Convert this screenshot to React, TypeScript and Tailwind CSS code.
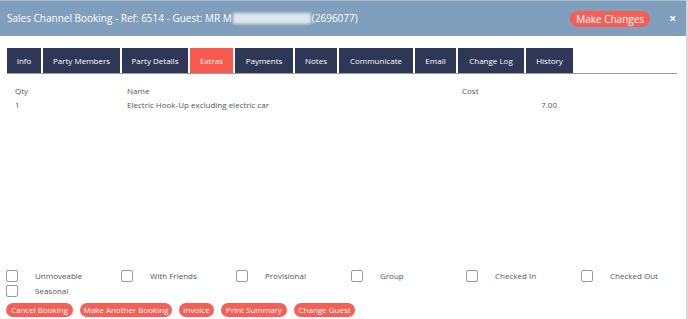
import React from 'react'

const tabs: [string, string][] = [
  ['Info', 'w-[34px]'],
  ['Party Members', 'w-[77px]'],
  ['Party Details', 'w-[66px]'],
  ['Extras', 'w-[43px]'],
  ['Payments', 'w-[58px]'],
  ['Notes', 'w-[42px]'],
  ['Communicate', 'w-[74px]'],
  ['Email', 'w-[41px]'],
  ['Change Log', 'w-[66px]'],
  ['History', 'w-[47px]'],
]
const flags = ['Unmoveable', 'With Friends', 'Provisional', 'Group', 'Checked In', 'Checked Out', 'Seasonal']
const actions: [string, string][] = [
  ['Cancel Booking', 'w-[67px]'],
  ['Make Another Booking', 'w-[92px]'],
  ['Invoice', 'w-[35px]'],
  ['Print Summary', 'w-[66px]'],
  ['Change Guest', 'w-[61px]'],
]

function Checkbox({ label }: { label: string }) {
  return (
    <div className="flex items-center h-[15px]">
      <span className="w-[12px] h-[12px] rounded-[2px] border border-[#9a9a9a] bg-white shrink-0" />
      <span className="ml-[17px] text-[8px] text-[#555]">{label}</span>
    </div>
  )
}

export default function App() {
  return (
    <div
      className="w-[688px] h-[319px] bg-white relative overflow-hidden flex flex-col border-r-2 border-[#d6d6d6]"
      style={{ fontFamily: '"Open Sans", "Liberation Sans", sans-serif' }}
    >
      <div className="h-[36px] bg-[#7f9fbd] border-t border-[#a9bfd3] flex items-center pl-[7px] pr-[10px]">
        <div className="text-[10px] text-white flex items-center">
          <span>Sales Channel Booking - Ref: 6514 - Guest: MR M</span>
          <span className="inline-block w-[78px] h-[11px] bg-[#dde6ef] blur-[1.5px] mx-[1px]" />
          <span>(2696077)</span>
        </div>
        <button className="ml-auto w-[80px] h-[16px] rounded-full bg-[#f55f56] text-white text-[10px] leading-none">
          Make Changes
        </button>
        <span className="ml-[19px] text-white text-[12px] font-bold leading-none">×</span>
      </div>

      <div className="px-[7px] pt-[12px]">
        <div className="flex gap-[2px] border-b border-[#9b9b9b] w-[670px]">
          {tabs.map(([t, w]) => (
            <div
              key={t}
              className={
                'h-[25px] flex items-center justify-center text-[8px] text-white ' +
                w +
                (t === 'Extras' ? ' bg-[#f85a50]' : ' bg-[#2f3756]')
              }
            >
              {t}
            </div>
          ))}
        </div>
      </div>

      <div className="pl-[15px] pt-[10px] text-[8px] text-[#555]">
        <div className="grid grid-cols-[112px_335px_95px] h-[14px] items-center">
          <span>Qty</span>
          <span>Name</span>
          <span>Cost</span>
        </div>
        <div className="grid grid-cols-[112px_335px_95px] h-[14px] items-center">
          <span>1</span>
          <span>Electric Hook-Up excluding electric car</span>
          <span className="text-right">7.00</span>
        </div>
      </div>

      <div className="mt-auto pl-[6px] pb-[2px]">
        <div className="grid grid-cols-[115px_115px_115px_115px_115px_115px]">
          {flags.map((f) => (
            <Checkbox key={f} label={f} />
          ))}
        </div>
        <div className="flex gap-[7px] mt-[5px]">
          {actions.map(([a, w]) => (
            <button key={a} className={'h-[14px] rounded-full bg-[#f55f56] text-white text-[8px] leading-none ' + w}>
              {a}
            </button>
          ))}
        </div>
      </div>
    </div>
  )
}
